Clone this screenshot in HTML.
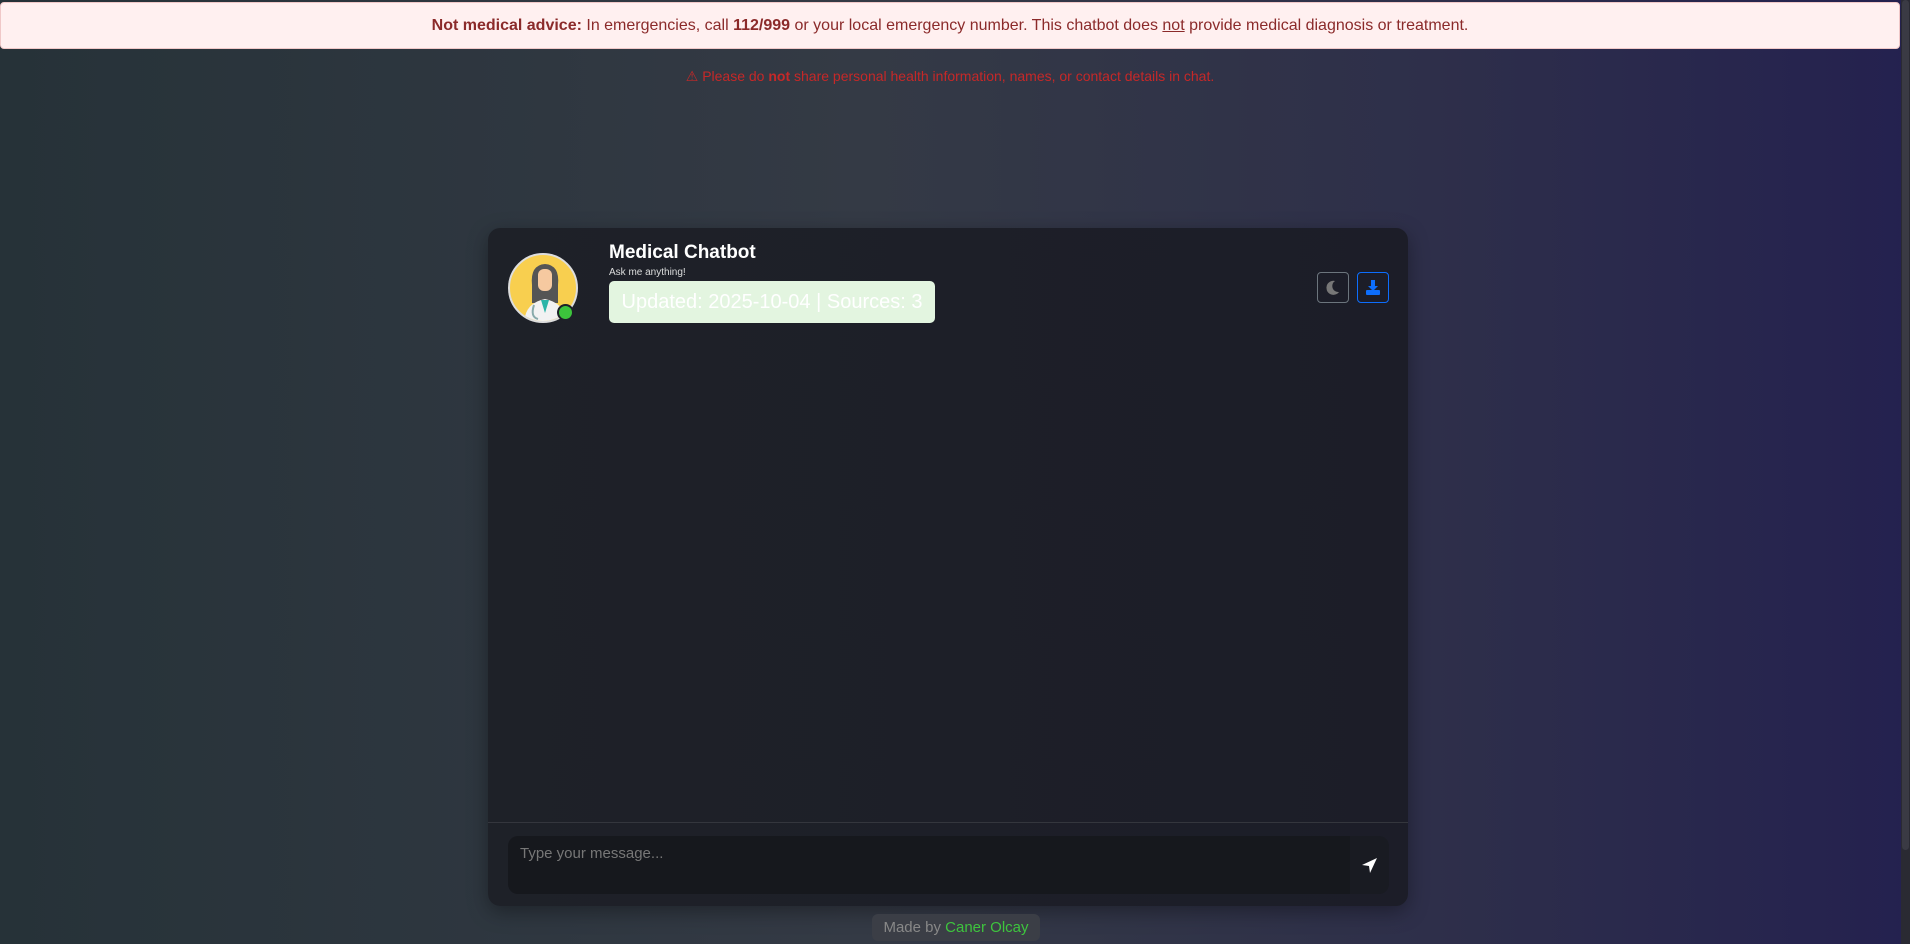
<!DOCTYPE html>
<html><head><meta charset="utf-8"><style>
*{box-sizing:border-box;margin:0;padding:0}
html,body{width:1910px;height:944px;overflow:hidden}
body{font-family:"Liberation Sans",sans-serif;background:linear-gradient(90deg,#263238 0%,#343a45 45%,#2e2f4a 75%,#24214f 100%);position:relative}
.sb{position:absolute;right:0;top:0;width:9px;height:944px;background:#2a2a33}
.sb i{position:absolute;left:1px;top:0;width:7px;height:850px;background:#3a3a44;border-radius:4px}
.banner{position:absolute;left:0;top:2px;width:1900px;height:47px;background:#fff0f0;border:1px solid #f0c8c8;border-radius:4px;color:#8b2a2a;font-size:16px;text-align:center;line-height:45px}
.warn{position:absolute;top:68px;width:1900px;text-align:center;color:#c62828;font-size:14px}
.card{position:absolute;left:488px;top:228px;width:920px;height:678px;background:linear-gradient(90deg,#1e2128,#1c1d28);border-radius:12px;box-shadow:0 6px 20px rgba(0,0,0,.35)}
.av{position:absolute;left:508px;top:253px;width:70px;height:70px;border-radius:50%;background:#f8cf4f;border:2px solid #ddd;overflow:hidden}
.dot{position:absolute;left:557px;top:304px;width:17px;height:17px;border-radius:50%;background:#3cc43c;border:2px solid #1e2128}
.t{position:absolute;left:609px;top:242px;color:#fff;font-weight:bold;font-size:19px}
.s{position:absolute;left:609px;top:267px;color:#ddd;font-size:10px}
.badge{position:absolute;left:609px;top:281px;width:326px;height:42px;background:#e3f5e0;border-radius:5px;color:#fff;font-size:20px;line-height:42px;text-align:center}
.b1{position:absolute;left:1317px;top:272px;width:32px;height:31px;border:1px solid #6c757d;border-radius:4px}
.b2{position:absolute;left:1357px;top:272px;width:32px;height:31px;border:1px solid #0d6efd;border-radius:4px}
.sep{position:absolute;left:488px;top:822px;width:920px;height:1px;background:#34363d}
.inp{position:absolute;left:508px;top:836px;width:842px;height:58px;background:#16181d;border-radius:10px 0 0 10px;color:#777;font-size:15px;padding:9px 12px}
.send{position:absolute;left:1350px;top:836px;width:39px;height:58px;background:#191b22;border-radius:0 10px 10px 0}
.foot{position:absolute;left:872px;top:914px;width:168px;height:27px;background:#3b3e46;border-radius:6px;color:#888;font-size:15px;text-align:center;line-height:27px}
</style></head><body>
<div class="banner"><b>Not medical advice:</b> In emergencies, call <b>112/999</b> or your local emergency number. This chatbot does <u>not</u> provide medical diagnosis or treatment.</div>
<div class="warn">&#9888; Please do <b>not</b> share personal health information, names, or contact details in chat.</div>
<div class="card"></div>
<div class="av"><svg width="70" height="70" viewBox="0 0 70 70"><path d="M22 30 Q20 10 35 9 Q50 10 48 30 L48 48 L22 48Z" fill="#555"/><rect x="28" y="14" width="14" height="22" rx="6" fill="#f6c9a0"/><path d="M14 70 Q14 48 35 44 Q56 48 56 70Z" fill="#f2f2f2"/><path d="M31 45 L35 58 L39 45Z" fill="#2bb5a8"/><path d="M24 50 Q20 62 28 64" stroke="#8aa" stroke-width="2" fill="none"/></svg></div>
<div class="dot"></div>
<div class="t">Medical Chatbot</div>
<div class="s">Ask me anything!</div>
<div class="badge">Updated: 2025-10-04 | Sources: 3</div>
<div class="b1"><svg width="30" height="29" viewBox="0 0 30 29"><path d="M17 8 A7 7 0 1 0 21 19 A6 6 0 0 1 17 8Z" fill="#777"/></svg></div>
<div class="b2"><svg width="30" height="29" viewBox="0 0 30 29"><path d="M13 7h4v6h3l-5 5-5-5h3z" fill="#0d6efd"/><rect x="8" y="17" width="14" height="5" rx="1" fill="#0d6efd"/></svg></div>
<div class="sep"></div>
<div class="inp">Type your message...</div>
<div class="send"><svg width="39" height="58" viewBox="0 0 39 58"><path d="M27 22 L12 29 L19 30 L20 37Z" fill="#fff"/></svg></div>
<div class="foot">Made by <span style="color:#3ec43e">Caner Olcay</span></div>
<div class="sb"><i></i></div>
</body></html>
